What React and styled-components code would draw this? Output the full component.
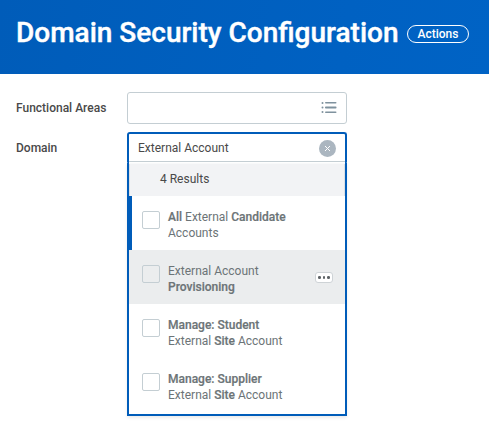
import React from 'react';
import styled, { createGlobalStyle } from 'styled-components';

const GlobalStyle = createGlobalStyle`
  * { box-sizing: border-box; }
  body {
    margin: 0;
    background: #fff;
    font-family: Roboto, "Liberation Sans", sans-serif;
    font-size: 12px;
    color: #494949;
    overflow: hidden;
  }
`;

const Page = styled.div`
  height: 425px;
`;

const Header = styled.header`
  display: flex;
  align-items: flex-start;
  height: 74px;
  padding: 15px 16px 0;
  background: linear-gradient(100deg, #005cb9, #0061c2 70%, #0063c5);
  color: #fff;
`;

const Title = styled.h1`
  width: 391px;
  margin: 0;
  font-size: 28px;
  line-height: 36px;
  font-weight: 500;
  -webkit-text-stroke: 0.4px #fff;
  white-space: nowrap;
`;

const ActionsButton = styled.button`
  flex: none;
  width: 62px;
  height: 18px;
  margin-top: 10px;
  padding: 0;
  border: 1px solid #fff;
  border-radius: 9px;
  background: transparent;
  color: #fff;
  font: 500 12px/16px Roboto, "Liberation Sans", sans-serif;
`;

const Form = styled.main`
  display: grid;
  grid-template-columns: 111px 220px;
  row-gap: 8px;
  align-items: start;
  padding: 18px 16px 0;
`;

const Label = styled.label`
  font-weight: 500;
  line-height: 32px;
  color: #494949;
`;

const Field = styled.div`
  display: flex;
  align-items: center;
  justify-content: space-between;
  height: 32px;
  padding: 0 9px;
  border: 1px solid #c4ced3;
  border-radius: 3px;
  background: #fff;
`;

const Combo = styled.div`
  display: flex;
  flex-direction: column;
`;

const ActiveField = styled.div`
  display: flex;
  align-items: center;
  justify-content: space-between;
  height: 31px;
  padding: 0 9px 1px;
  border: 2px solid #005cb9;
  border-bottom: 0;
  border-radius: 3px 3px 1px 1px;
  background: linear-gradient(#c4ced3, #c4ced3) 0 27px / 100% 1px no-repeat;
`;

const Menu = styled.div`
  height: 253px;
  border: 2px solid #005cb9;
  border-top: 0;
  box-shadow: 0 2px 3px rgba(0, 0, 0, 0.08);
`;

const ResultCount = styled.div`
  height: 33px;
  padding-left: 31px;
  border-top: 1px solid #f8f9fa;
  box-shadow: inset 1px 0 #dce0e4, inset -1px 0 #dce0e4;
  background: #f2f3f5;
  line-height: 31px;
`;

const Option = styled.div`
  display: flex;
  align-items: flex-start;
  height: 54px;
  padding: 13px 12px 0 ${(p) => (p.$current ? 10 : 13)}px;
  border-left: ${(p) => (p.$current ? '3px solid #005cb9' : '0')};
  background: ${(p) => (p.$hovered ? '#ebedee' : '#fff')};
  color: #6c7477;
`;

const Checkbox = styled.span`
  flex: none;
  width: 18px;
  height: 18px;
  margin: 2px 8px 0 0;
  border: 1px solid #c4ced3;
  border-radius: 2px;
`;

const OptionText = styled.span`
  flex: 1;
  line-height: 16px;
  white-space: nowrap;

  b {
    font-weight: 500;
    -webkit-text-stroke: 0.2px currentColor;
  }
`;

const MoreButton = styled.span`
  display: flex;
  align-items: center;
  justify-content: center;
  gap: 2px;
  width: 18px;
  height: 11px;
  margin-top: 9px;
  border: 1px solid #ced3d6;
  border-radius: 3px;
  background: #fff;
`;

const Dot = styled.i`
  width: 2.5px;
  height: 2.5px;
  border-radius: 50%;
  background: #5e6366;
`;

const ListIcon = () => (
  <svg width="16" height="14" viewBox="0 0 16 14" fill="#7f929e">
    <rect x="0.5" y="1" width="2" height="2" rx="1" />
    <rect x="4" y="1" width="11.5" height="1.6" rx=".8" />
    <rect x="0.5" y="5.5" width="2" height="2" rx="1" />
    <rect x="4" y="5.5" width="11.5" height="2" rx=".8" />
    <rect x="0.5" y="10" width="2" height="2" rx="1" />
    <rect x="4" y="10.4" width="11.5" height="1.6" rx=".8" />
  </svg>
);

const IconSlot = styled.span`
  display: flex;
  margin-left: auto;
`;

const ClearIcon = () => (
  <svg width="17" height="17" viewBox="0 0 17 17">
    <circle cx="8.5" cy="8.5" r="8.5" fill="#abb6c0" />
    <path d="M6 6l5 5M11 6l-5 5" stroke="#fff" strokeWidth="1" />
  </svg>
);

const options = [
  { current: true, text: <><b>All</b> External <b>Candidate</b><br />Accounts</> },
  { hovered: true, text: <>External Account<br /><b>Provisioning</b></> },
  { text: <><b>Manage: Student</b><br />External <b>Site</b> Account</> },
  { text: <><b>Manage: Supplier</b><br />External <b>Site</b> Account</> },
];

export default function App() {
  return (
    <Page>
      <GlobalStyle />
      <Header>
        <Title>Domain Security Configuration</Title>
        <ActionsButton>Actions</ActionsButton>
      </Header>
      <Form>
        <Label>Functional Areas</Label>
        <Field><IconSlot><ListIcon /></IconSlot></Field>
        <Label>Domain</Label>
        <Combo>
          <ActiveField>External Account<IconSlot><ClearIcon /></IconSlot></ActiveField>
          <Menu>
            <ResultCount>4 Results</ResultCount>
            {options.map((o, i) => (
              <Option key={i} $current={o.current} $hovered={o.hovered}>
                <Checkbox />
                <OptionText>{o.text}</OptionText>
                {o.hovered && <MoreButton><Dot /><Dot /><Dot /></MoreButton>}
              </Option>
            ))}
          </Menu>
        </Combo>
      </Form>
    </Page>
  );
}
